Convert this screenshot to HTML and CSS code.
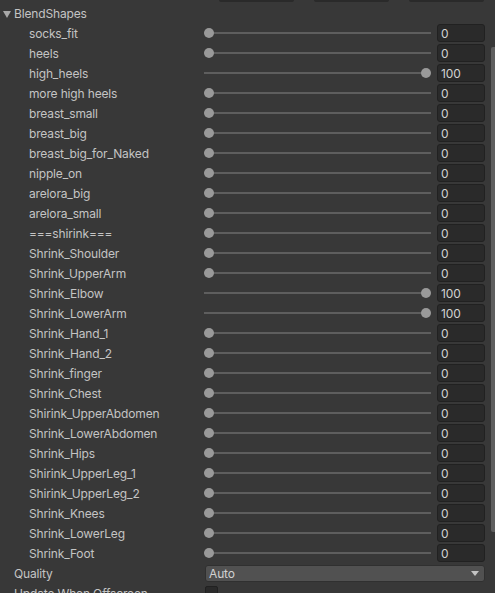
FILE: index.html
```html
<!DOCTYPE html>
<html>
<head>
<meta charset="utf-8">
<link rel="stylesheet" href="styles.css">
</head>
<body>
<div class="page">
  <div class="main">
    <div class="buttons">
      <div class="btn"></div>
      <div class="btn"></div>
      <div class="btn"></div>
    </div>
    <div class="header"><span class="tri"></span><span>BlendShapes</span></div>
    <div class="row"><div class="label">socks_fit</div><div class="slider"><div class="thumb"></div></div><div class="field">0</div></div>
    <div class="row"><div class="label">heels</div><div class="slider"><div class="thumb"></div></div><div class="field">0</div></div>
    <div class="row"><div class="label">high_heels</div><div class="slider max"><div class="thumb"></div></div><div class="field">100</div></div>
    <div class="row"><div class="label">more high heels</div><div class="slider"><div class="thumb"></div></div><div class="field">0</div></div>
    <div class="row"><div class="label">breast_small</div><div class="slider"><div class="thumb"></div></div><div class="field">0</div></div>
    <div class="row"><div class="label">breast_big</div><div class="slider"><div class="thumb"></div></div><div class="field">0</div></div>
    <div class="row"><div class="label">breast_big_for_Naked</div><div class="slider"><div class="thumb"></div></div><div class="field">0</div></div>
    <div class="row"><div class="label">nipple_on</div><div class="slider"><div class="thumb"></div></div><div class="field">0</div></div>
    <div class="row"><div class="label">arelora_big</div><div class="slider"><div class="thumb"></div></div><div class="field">0</div></div>
    <div class="row"><div class="label">arelora_small</div><div class="slider"><div class="thumb"></div></div><div class="field">0</div></div>
    <div class="row"><div class="label">===shirink===</div><div class="slider"><div class="thumb"></div></div><div class="field">0</div></div>
    <div class="row"><div class="label">Shrink_Shoulder</div><div class="slider"><div class="thumb"></div></div><div class="field">0</div></div>
    <div class="row"><div class="label">Shrink_UpperArm</div><div class="slider"><div class="thumb"></div></div><div class="field">0</div></div>
    <div class="row"><div class="label">Shrink_Elbow</div><div class="slider max"><div class="thumb"></div></div><div class="field">100</div></div>
    <div class="row"><div class="label">Shrink_LowerArm</div><div class="slider max"><div class="thumb"></div></div><div class="field">100</div></div>
    <div class="row"><div class="label">Shrink_Hand_1</div><div class="slider"><div class="thumb"></div></div><div class="field">0</div></div>
    <div class="row"><div class="label">Shrink_Hand_2</div><div class="slider"><div class="thumb"></div></div><div class="field">0</div></div>
    <div class="row"><div class="label">Shrink_finger</div><div class="slider"><div class="thumb"></div></div><div class="field">0</div></div>
    <div class="row"><div class="label">Shrink_Chest</div><div class="slider"><div class="thumb"></div></div><div class="field">0</div></div>
    <div class="row"><div class="label">Shirink_UpperAbdomen</div><div class="slider"><div class="thumb"></div></div><div class="field">0</div></div>
    <div class="row"><div class="label">Shrink_LowerAbdomen</div><div class="slider"><div class="thumb"></div></div><div class="field">0</div></div>
    <div class="row"><div class="label">Shrink_Hips</div><div class="slider"><div class="thumb"></div></div><div class="field">0</div></div>
    <div class="row"><div class="label">Shirink_UpperLeg_1</div><div class="slider"><div class="thumb"></div></div><div class="field">0</div></div>
    <div class="row"><div class="label">Shirink_UpperLeg_2</div><div class="slider"><div class="thumb"></div></div><div class="field">0</div></div>
    <div class="row"><div class="label">Shrink_Knees</div><div class="slider"><div class="thumb"></div></div><div class="field">0</div></div>
    <div class="row"><div class="label">Shrink_LowerLeg</div><div class="slider"><div class="thumb"></div></div><div class="field">0</div></div>
    <div class="row"><div class="label">Shrink_Foot</div><div class="slider"><div class="thumb"></div></div><div class="field">0</div></div>
    <div class="prop"><div class="plabel">Quality</div><div class="dropdown"><span>Auto</span><span class="arrow"></span></div></div>
    <div class="prop"><div class="plabel">Update When Offscreen</div><div class="check"></div></div>
  </div>
  <div class="scrollbar"><div class="sthumb"></div></div>
</div>
</body>
</html>
```
FILE: styles.css
```css
* { box-sizing: border-box; }
html, body {
  margin: 0;
  padding: 0;
  background: #383838;
  overflow: hidden;
}
body {
  font-family: Inter, "Noto Sans", sans-serif;
  font-size: 12px;
  letter-spacing: -0.15px;
  color: #c4c4c4;
}
.page {
  display: flex;
  width: 495px;
  height: 593px;
  overflow: hidden;
}
.main {
  width: 487px;
  display: flex;
  flex-direction: column;
}
.main > * { flex-shrink: 0; }
.buttons {
  height: 4px;
  display: flex;
  padding-left: 219px;
  gap: 20px;
}
.btn {
  width: 75px;
  height: 2px;
  background: #2a2a2a;
  border-radius: 0 0 3px 3px;
}
.header {
  height: 20px;
  display: flex;
  align-items: center;
  line-height: 20px;
}
.tri {
  width: 0;
  height: 0;
  margin-left: 3px;
  margin-right: 3px;
  border-left: 4px solid transparent;
  border-right: 4px solid transparent;
  border-top: 7px solid #a8a8a8;
}
.row {
  height: 20px;
  display: flex;
  align-items: flex-start;
}
.label {
  width: 204px;
  padding-left: 29px;
  padding-top: 1px;
  line-height: 18px;
  white-space: nowrap;
}
.slider {
  width: 227px;
  height: 18px;
  display: flex;
  align-items: center;
  justify-content: flex-start;
  background: linear-gradient(#5e5e5e, #5e5e5e) center / 100% 2px no-repeat;
}
.slider.max { justify-content: flex-end; }
.thumb {
  width: 10px;
  height: 10px;
  border-radius: 50%;
  background: #999999;
}
.field {
  margin-left: 6px;
  width: 48px;
  height: 18px;
  background: #2a2a2a;
  border: 1px solid #212121;
  border-radius: 3px;
  padding-left: 3px;
  padding-top: 1px;
  line-height: 16px;
  color: #d2d2d2;
}
.prop {
  height: 20px;
  display: flex;
  align-items: flex-start;
}
.plabel {
  width: 205px;
  padding-left: 14px;
  line-height: 20px;
  white-space: nowrap;
}
.dropdown {
  margin-top: 1px;
  width: 280px;
  height: 17px;
  background: #515151;
  border: 1px solid #303030;
  border-radius: 3px;
  display: flex;
  align-items: center;
  justify-content: space-between;
  padding: 0 5px 0 3px;
  color: #d2d2d2;
}
.arrow {
  width: 0;
  height: 0;
  border-left: 4px solid transparent;
  border-right: 4px solid transparent;
  border-top: 5px solid #c4c4c4;
}
.check {
  margin-top: 2px;
  width: 13px;
  height: 13px;
  background: #2a2a2a;
  border: 1px solid #212121;
  border-radius: 2px;
}
.scrollbar {
  width: 8px;
  padding-left: 4px;
}
.sthumb {
  margin-top: 47px;
  height: 485px;
  background: #5f5f5f;
  border-radius: 2px 0 0 2px;
}
```
